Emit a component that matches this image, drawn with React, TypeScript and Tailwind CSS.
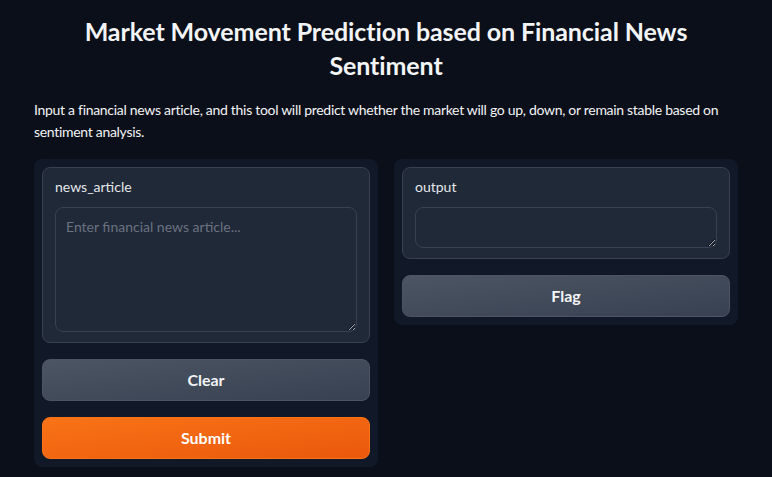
import React from "react";

export default function App() {
  return (
    <div
      className="min-h-screen w-full bg-[#0b0f19] px-[34px] pt-[14px] pb-4 text-[#f3f4f6]"
      style={{ fontFamily: "Lato, 'Noto Sans', Roboto, sans-serif" }}
    >
      <h1 className="mx-auto max-w-[640px] text-center text-[25px] font-bold leading-[34px] tracking-[-0.1px] text-[#f3f4f6]">
        Market Movement Prediction based on Financial News Sentiment
      </h1>
      <p className="mt-[17px] text-[14px] leading-[22px] tracking-[-0.3px] text-[#f3f4f6]">
        Input a financial news article, and this tool will predict whether the market will go up, down, or remain stable based on sentiment analysis.
      </p>

      <div className="mt-4 grid grid-cols-2 items-start gap-4">
        <div className="flex flex-col gap-4 rounded-lg bg-[#111827] p-2">
          <div className="rounded-lg border border-[#374151] bg-[#1f2937] px-3 pt-[9px] pb-[10px]">
            <div className="mb-[10px] text-[14px] leading-[20px] text-[#e5e7eb]">news_article</div>
            <textarea
              className="block h-[125px] w-full resize-y rounded-lg border border-[#374151] bg-[#1f2937] px-[10px] py-[9px] text-[14px] leading-[20px] text-[#e5e7eb] placeholder-[#6b7280] outline-none"
              placeholder="Enter financial news article..."
            />
          </div>
          <button className="h-[42px] w-full rounded-lg border border-[#4b5563] bg-gradient-to-br from-[#4b5563] to-[#374151] text-[16px] font-bold text-[#f3f4f6]">
            Clear
          </button>
          <button className="h-[42px] w-full rounded-lg border border-[#f97316] bg-gradient-to-br from-[#f97316] to-[#ea580c] text-[16px] font-bold text-white">
            Submit
          </button>
        </div>

        <div className="flex flex-col gap-4 rounded-lg bg-[#111827] p-2">
          <div className="rounded-lg border border-[#374151] bg-[#1f2937] px-3 pt-[9px] pb-[10px]">
            <div className="mb-[10px] text-[14px] leading-[20px] text-[#e5e7eb]">output</div>
            <textarea
              className="block h-[41px] w-full resize-y rounded-lg border border-[#374151] bg-[#1f2937] px-[10px] py-[9px] text-[14px] leading-[20px] text-[#e5e7eb] outline-none"
              readOnly
            />
          </div>
          <button className="h-[42px] w-full rounded-lg border border-[#4b5563] bg-gradient-to-br from-[#4b5563] to-[#374151] text-[16px] font-bold text-[#f3f4f6]">
            Flag
          </button>
        </div>
      </div>
    </div>
  );
}
